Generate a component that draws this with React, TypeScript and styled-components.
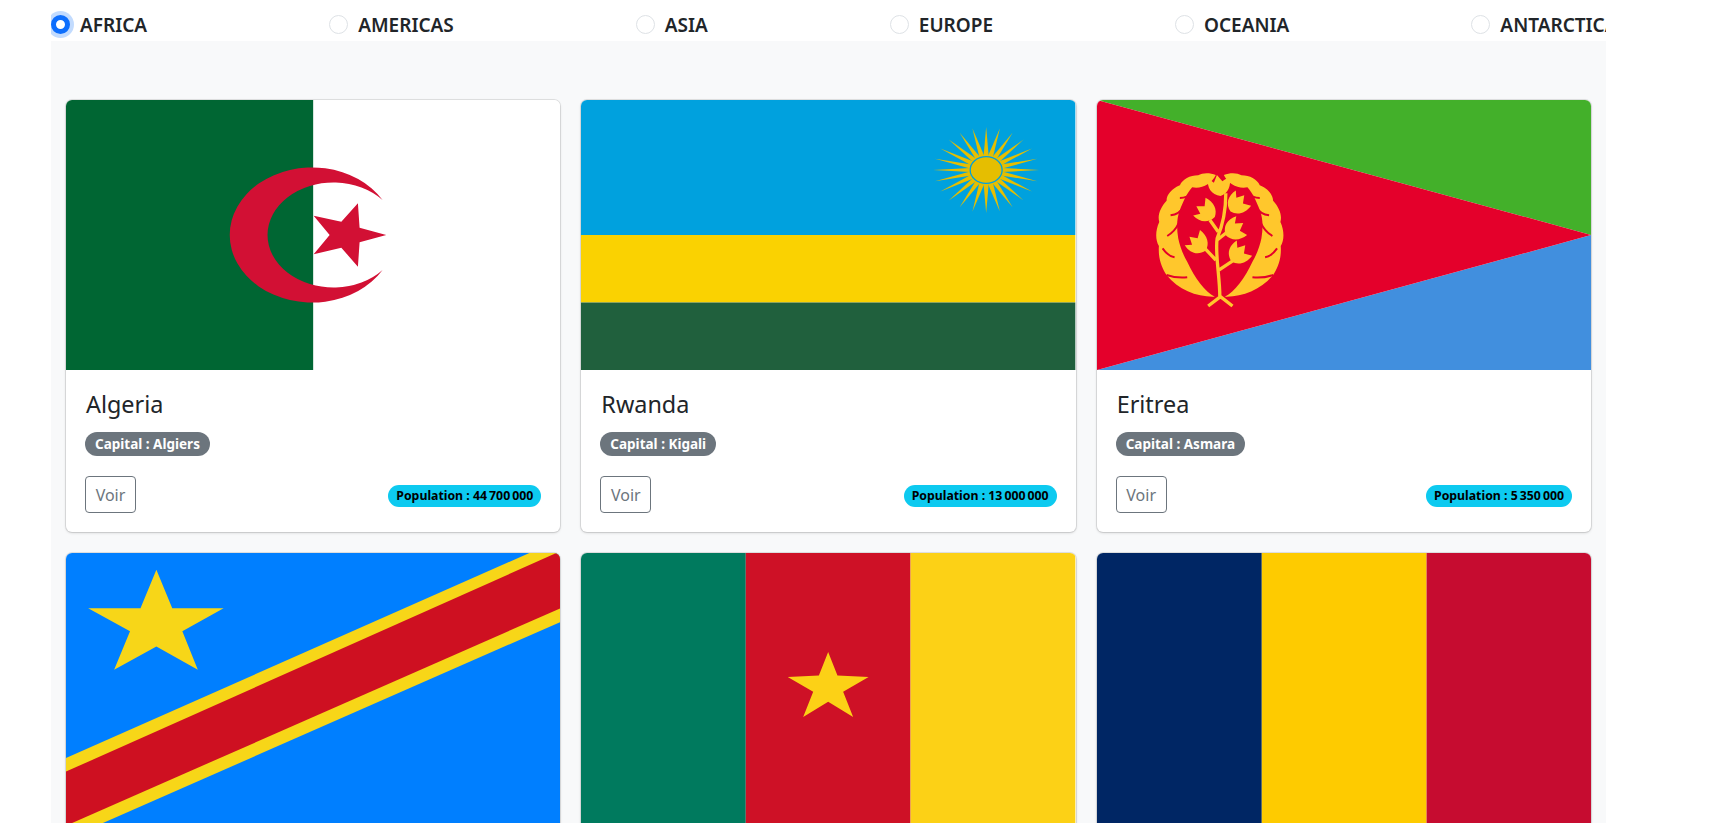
import React from "react";
import styled, { createGlobalStyle } from "styled-components";

const Global = createGlobalStyle`
  html, body { margin: 0; padding: 0; background: #fff; scrollbar-width: none; }
  body { font-family: "Noto Sans", "Open Sans", "Liberation Sans", sans-serif; color: #212529; }
`;

const Page = styled.div`
  width: 1555px;
  margin-left: 51px;
`;

const RadioBar = styled.div`
  display: flex;
  gap: 182px;
  height: 41px;
  overflow: hidden;
  align-items: flex-start;
  padding-top: 6px;
  box-sizing: border-box;
`;

const RadioItem = styled.label`
  display: flex;
  flex: none;
  align-items: center;
  gap: 10px;
  height: 36px;
`;

const RadioInput = styled.input`
  appearance: none;
  flex: none;
  margin: 0;
  width: 19px;
  height: 19px;
  border-radius: 50%;
  background: #fff;
  border: 1px solid #dee2e6;
  box-sizing: border-box;
  &:checked {
    border: 5px solid #0d6efd;
    box-shadow: 0 0 0 4px rgba(13, 110, 253, 0.25);
  }
`;

const RadioText = styled.span`
  font-size: 19px;
  font-weight: 600;
  line-height: 24px;
  margin-top: 2px;
  white-space: nowrap;
`;

const Panel = styled.div`
  background: #f8f9fa;
  padding: 59px 15px 20px;
  display: grid;
  grid-template-columns: repeat(3, 1fr);
  column-gap: 21px;
  row-gap: 21px;
`;

const Card = styled.div`
  background: #fff;
  border-radius: 6px;
  overflow: hidden;
  box-shadow: 0 0 0 1px rgba(0, 0, 0, 0.09), 0 1px 3px rgba(0, 0, 0, 0.15);
`;

const FlagSvg = styled.svg`
  display: block;
  width: 100%;
  height: 270px;
`;

const CardBody = styled.div`
  padding: 20px 19px 19px;
  display: flex;
  flex-direction: column;
  align-items: flex-start;
`;

const Title = styled.h4`
  margin: 0 0 13px 1px;
  font-size: 23.4px;
  font-weight: 400;
  line-height: 29px;
`;

const CapitalBadge = styled.span`
  display: inline-block;
  background: #6c757d;
  color: #fff;
  font-size: 13.5px;
  font-weight: 700;
  line-height: 24px;
  height: 24px;
  padding: 0 10px;
  border-radius: 12px;
  white-space: nowrap;
`;

const Footer = styled.div`
  display: flex;
  align-self: stretch;
  justify-content: space-between;
  align-items: center;
  margin-top: 20px;
`;

const VoirButton = styled.button`
  width: 51px;
  height: 37px;
  padding: 0;
  font: 400 16px "Noto Sans", sans-serif;
  color: #6c757d;
  background: transparent;
  border: 1px solid #6c757d;
  border-radius: 4px;
`;

const PopBadge = styled.span`
  margin-top: 3px;
  background: #0dcaf0;
  color: #000;
  font-size: 12.3px;
  font-weight: 700;
  line-height: 22px;
  height: 22px;
  padding: 0 8px;
  border-radius: 11px;
  white-space: nowrap;
`;

const Algeria = () => (
  <FlagSvg viewBox="0 0 495 270" preserveAspectRatio="none">
    <rect width="495" height="270" fill="#fff" />
    <rect width="247.5" height="270" fill="#006633" />
    <path d="M317 100A82.5 67.5 0 1 0 317 170A66 52.5 0 1 1 317 100Z" fill="#d21034" />
    <polygon
      points="292.3,103.3 294,127.7 320.7,135 294,142.3 292.3,166.7 275.7,147.7 248,154.3 264,135 248,115.7 275.7,121.7"
      fill="#d21034"
    />
  </FlagSvg>
);

const sunRays = Array.from({ length: 24 }, (_, i) => {
  const a = (i * Math.PI) / 12;
  const c = Math.cos(a);
  const s = Math.sin(a);
  const tip = `${405.7 + 53 * c},${70 + 43 * s}`;
  const b1 = `${405.7 + 16 * c - 2.6 * s},${70 + 13.3 * s + 2.1 * c}`;
  const b2 = `${405.7 + 16 * c + 2.6 * s},${70 + 13.3 * s - 2.1 * c}`;
  return `${tip} ${b1} ${b2}`;
});

const Rwanda = () => (
  <FlagSvg viewBox="0 0 495 270" preserveAspectRatio="none">
    <rect width="495" height="135" fill="#00a1de" />
    <rect y="135" width="495" height="67.5" fill="#fad201" />
    <rect y="202.5" width="495" height="67.5" fill="#20603d" />
    {sunRays.map((p) => (
      <polygon key={p} points={p} fill="#e5be01" />
    ))}
    <ellipse cx="405.7" cy="70" rx="16" ry="13.4" fill="#e5be01" stroke="#00a1de" strokeWidth="1.3" />
  </FlagSvg>
);

const wreathBand =
  "M258 45C240 38 218 38 205 46C180 46 158 58 150 76C126 86 110 104 110 122C92 142 82 165 88 186C76 212 76 240 87 258C84 295 96 325 110 345C145 390 205 412 255 410C225 395 195 355 172 305C160 285 150 260 145 235C140 205 140 175 150 150C158 130 170 100 187 82C215 88 245 72 258 45Z";

const wreathNotches = [
  "M150 114C165 114 178 108 188 98",
  "M122 166C138 164 152 156 162 140",
  "M112 228C125 220 138 208 146 190",
  "M98 265C110 282 122 290 134 292",
  "M110 345C130 352 152 354 172 352",
];

const buds: [number, number, number][] = [
  [270, 80, -5],
  [232, 155, -55],
  [322, 135, 45],
  [312, 212, 60],
  [208, 252, -45],
  [325, 285, 45],
];

const Eritrea = () => (
  <FlagSvg viewBox="0 0 495 270" preserveAspectRatio="none">
    <polygon points="0,0 495,0 495,135" fill="#43b02a" />
    <polygon points="0,270 495,270 495,135" fill="#418fde" />
    <polygon points="0,0 495,135 0,270" fill="#e4002b" />
    <g transform="translate(33 60) scale(0.3333)">
      {[0, 1].map((side) => (
        <g key={side} transform={side ? "matrix(-1 0 0 1 540 0)" : undefined}>
          <path d={wreathBand} fill="#ffc72c" />
          {wreathNotches.map((d) => (
            <path key={d} d={d} fill="none" stroke="#e4002b" strokeWidth="6" />
          ))}
        </g>
      ))}
      <path
        d="M270 410C270 350 255 280 262 235C275 205 288 160 288 100M262 240L300 210M265 215L240 180M268 330L320 295M258 300L225 265M235 438L272 410L308 438"
        fill="none"
        stroke="#ffc72c"
        strokeWidth="10"
      />
      {buds.map(([x, y, r]) => (
        <path
          key={`${x}-${y}`}
          transform={`translate(${x} ${y}) rotate(${r}) scale(1.12)`}
          fill="#ffc72c"
          d="M0 25C-25 20-35 0-30-25L-15-12L-5-32L8-14L28-25C32 0 20 20 0 25Z"
        />
      ))}
    </g>
  </FlagSvg>
);

const Congo = () => (
  <FlagSvg viewBox="0 0 495 270" preserveAspectRatio="none">
    <rect width="495" height="270" fill="#007fff" />
    <polygon points="0,205 464,0 495,0 495,69 37,270 0,270" fill="#f7d618" />
    <polygon points="0,218.6 491,0 495,0 495,55.3 0,272.7" fill="#ce1021" />
    <polygon
      points="90.5,16.7 106.4,55.3 157.8,55.3 116.5,78.3 132,116.8 90.5,93.5 48.2,116.8 64.1,78.3 22.2,55.3 74.6,55.3"
      fill="#f7d618"
    />
  </FlagSvg>
);

const Cameroon = () => (
  <FlagSvg viewBox="0 0 495 270" preserveAspectRatio="none">
    <rect width="165" height="270" fill="#007a5e" />
    <rect x="165" width="165" height="270" fill="#ce1126" />
    <rect x="330" width="165" height="270" fill="#fcd116" />
    <polygon
      points="247.5,99 256.8,122.6 288,123.9 262.5,138.8 272.5,164 247.5,148.8 222.5,164 232.5,138.8 207,123.9 238.2,122.6"
      fill="#fcd116"
    />
  </FlagSvg>
);

const Chad = () => (
  <FlagSvg viewBox="0 0 495 270" preserveAspectRatio="none">
    <rect width="165" height="270" fill="#002664" />
    <rect x="165" width="165" height="270" fill="#fecb00" />
    <rect x="330" width="165" height="270" fill="#c60c30" />
  </FlagSvg>
);

const regions = ["AFRICA", "AMERICAS", "ASIA", "EUROPE", "OCEANIA", "ANTARCTICA"];

const countries = [
  { name: "Algeria", capital: "Algiers", population: "44\u202f700\u202f000", Flag: Algeria },
  { name: "Rwanda", capital: "Kigali", population: "13\u202f000\u202f000", Flag: Rwanda },
  { name: "Eritrea", capital: "Asmara", population: "5\u202f350\u202f000", Flag: Eritrea },
  { name: "DR Congo", capital: "Kinshasa", population: "92\u202f400\u202f000", Flag: Congo },
  { name: "Cameroon", capital: "Yaoundé", population: "26\u202f500\u202f000", Flag: Cameroon },
  { name: "Chad", capital: "N'Djamena", population: "16\u202f400\u202f000", Flag: Chad },
];

export default function App() {
  return (
    <>
      <Global />
      <Page>
        <RadioBar>
          {regions.map((r, i) => (
            <RadioItem key={r}>
              <RadioInput type="radio" name="region" defaultChecked={i === 0} />
              <RadioText>{r}</RadioText>
            </RadioItem>
          ))}
        </RadioBar>
        <Panel>
          {countries.map(({ name, capital, population, Flag }) => (
            <Card key={name}>
              <Flag />
              <CardBody>
                <Title>{name}</Title>
                <CapitalBadge>Capital : {capital}</CapitalBadge>
                <Footer>
                  <VoirButton>Voir</VoirButton>
                  <PopBadge>Population : {population}</PopBadge>
                </Footer>
              </CardBody>
            </Card>
          ))}
        </Panel>
      </Page>
    </>
  );
}
